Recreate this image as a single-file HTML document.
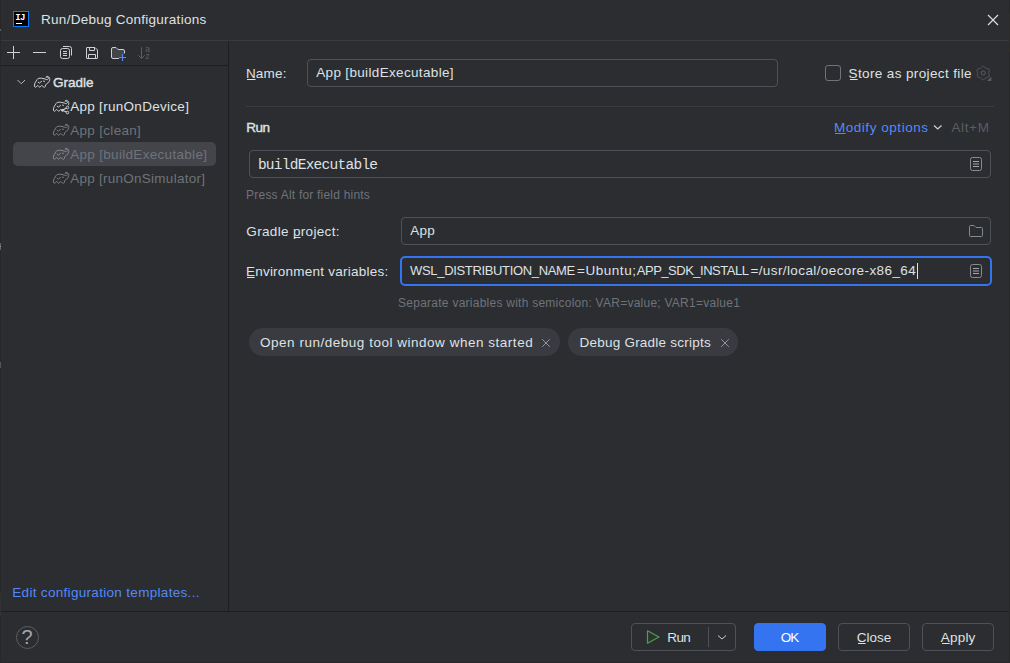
<!DOCTYPE html>
<html lang="en">
<head>
<meta charset="utf-8">
<title>Run/Debug Configurations</title>
<style>
html,body{margin:0;padding:0;}
body{width:1010px;height:663px;overflow:hidden;background:#2b2d30;font-family:"Liberation Sans",sans-serif;font-size:13.5px;color:#dfe1e5;position:relative;}
.abs{position:absolute;}
.t{position:absolute;white-space:nowrap;line-height:16px;height:16px;}
.b{font-weight:normal;font-size:13.5px;-webkit-text-stroke:0.4px currentColor;}
.dim{color:#6f737a;}
.link{color:#548af7;}
.hl{position:absolute;height:1px;background:#393b40;}
.vl{position:absolute;width:1px;background:#1e1f22;}
.field{position:absolute;box-sizing:border-box;border:1px solid #4e5157;border-radius:4px;height:28px;}
.btn{position:absolute;box-sizing:border-box;border:1px solid #4e5157;border-radius:4px;height:28px;top:623px;}
.chip{position:absolute;height:28px;border-radius:14px;background:#393b40;top:328px;}
svg{position:absolute;overflow:visible;}
u{text-decoration:none;background:linear-gradient(currentColor,currentColor) 1px 13px/calc(100% - 1.4px) 1px no-repeat;}
</style>
</head>
<body>
<!-- edge strips -->
<div class="abs" style="left:0;top:0;width:1px;height:663px;background:#28282a;"></div>
<div class="abs" style="left:0;top:29px;width:1px;height:2px;background:#5a5c5e;"></div>
<div class="abs" style="left:0;top:243px;width:1px;height:7px;background:#6b635a;"></div>
<div class="abs" style="left:0;top:246px;width:1px;height:1px;background:#8d8d8f;"></div>
<div class="abs" style="left:0;top:362px;width:1px;height:6px;background:#4c5a5e;"></div>
<div class="abs" style="left:0;top:593px;width:1px;height:23px;background:#303236;"></div>
<div class="abs" style="left:1009px;top:0;width:1px;height:663px;background:#27282a;"></div>
<div class="abs" style="left:1009px;top:13px;width:1px;height:39px;background:#2e2a25;"></div>
<div class="abs" style="left:0;top:662px;width:1010px;height:1px;background:#27282a;"></div>

<!-- title bar -->
<div class="abs" style="left:13px;top:11px;width:16px;height:16px;background:#000;box-sizing:border-box;border:1px solid #087cfa;"></div>
<div class="t" id="ij" style="left:15.2px;top:13px;font-size:9px;line-height:10px;height:10px;color:#fff;font-weight:bold;font-family:'Liberation Mono',monospace;letter-spacing:-0.5px;">IJ</div>
<div class="abs" style="left:16px;top:23px;width:6px;height:1px;background:#fff;"></div>
<div class="t" id="title" style="left:41.1px;top:12px;letter-spacing:0.26px;">Run/Debug Configurations</div>
<svg style="left:985px;top:12px;" width="16" height="16" viewBox="0 0 16 16"><path d="M3 3L13 13M13 3L3 13" stroke="#dfe1e5" stroke-width="1.1" fill="none"/></svg>
<div class="hl" style="left:1px;top:40px;width:1008px;"></div>

<!-- toolbar -->
<svg style="left:5px;top:44px;" width="16" height="16" viewBox="0 0 16 16"><path d="M2 8.5H15M8.5 2V15" stroke="#ced0d6" stroke-width="1" fill="none"/></svg>
<svg style="left:31px;top:44px;" width="16" height="16" viewBox="0 0 16 16"><path d="M2 8.5H15" stroke="#ced0d6" stroke-width="1" fill="none"/></svg>
<svg style="left:57px;top:44px;" width="16" height="16" viewBox="0 0 16 16"><g stroke="#ced0d6" stroke-width="1" fill="none"><rect x="3.5" y="4.5" width="9" height="10" rx="2"/><path d="M6 2.5H12.5Q14.5 2.5 14.5 4.5V11.5"/><path d="M6 7.5H10M6 9.5H10M6 11.5H10"/></g></svg>
<svg style="left:84px;top:45px;" width="16" height="16" viewBox="0 0 16 16"><g stroke="#ced0d6" stroke-width="1" fill="none" stroke-linejoin="round"><path d="M3 2.5H11L13.5 5V13Q13.5 13.500 13 13.500H3Q2.500 13.500 2.500 13V3Q2.500 2.500 3 2.500Z"/><path d="M5.5 2.500V5.500H10.500V2.500"/><path d="M4.500 13.500V9.500H11.500V13.500"/></g></svg>
<svg style="left:110px;top:45px;" width="16" height="16" viewBox="0 0 16 16"><path d="M9 13.500H3Q1.500 13.500 1.500 12V4Q1.500 2.500 3 2.500H6L8 4.500H13Q14.500 4.500 14.500 6V8.500" stroke="#ced0d6" stroke-width="1" fill="#43454a"/><path d="M9 12.500H16M12.500 9V16" stroke="#548af7" stroke-width="1.200" fill="none"/></svg>
<svg style="left:136px;top:45px;" width="16" height="16" viewBox="0 0 16 16"><path d="M5.500 2.300V13.300M2.300 10.300L5.500 13.500L8.700 10.300" stroke="#5a5d63" stroke-width="1" fill="none"/><text x="9.300" y="7.300" font-family="Liberation Sans, sans-serif" font-size="8.500" fill="#5a5d63">a</text><text x="9.600" y="14" font-family="Liberation Sans, sans-serif" font-size="8.500" fill="#5a5d63">z</text></svg>
<div class="hl" style="left:1px;top:65px;width:227px;background:#1e1f22;"></div>

<!-- sidebar divider -->
<div class="vl" style="left:228px;top:41px;height:570px;"></div>

<!-- tree -->
<div class="abs" style="left:13px;top:142px;width:203px;height:24px;border-radius:5px;background:#43454a;"></div>
<svg style="left:13px;top:74px;" width="16" height="16" viewBox="0 0 16 16"><path d="M4.500 6L8.300 9.800L12 6" stroke="#b4b8bf" stroke-width="1" fill="none"/></svg>
<svg style="left:34px;top:74px;opacity:1;" width="16" height="16" viewBox="0 0 16 16"><path d="M12.400 2.600C13 2.100 14 2.200 14.800 3C15.600 3.800 16 5 15.700 6.200C15.400 7.600 14.400 8.600 12.700 9.900L11.600 10.700L11.300 12.500Q10.600 13.600 9.900 13.300Q9.300 13 8.800 12.300Q8.100 11.300 7.400 11.600Q6.800 12 6.200 13Q5.500 13.400 4.800 12.600Q4.200 11.500 3.600 11.500Q3 11.700 2.600 12.600Q2 13.400 1.200 13.100Q0.400 12.800 0.400 12C0.400 10.600 0.800 9.200 1.400 8.200C2 7.200 2.600 6.600 3 5.800C3.300 5 3.800 4.500 5 4.300C6.600 4 8.400 4.200 10 4.700C11 5 12 5.500 12.600 5.600C13.400 5.800 14.200 5.400 14.400 4.600C14.600 3.800 14 3.200 13.200 3.100C12.700 3 12.200 3.200 11.900 3.500" stroke="#ced0d6" stroke-width="1" fill="none" stroke-linejoin="round" stroke-linecap="round"/><path d="M4.200 8.200L5.400 9.100L7.500 7.400M9.500 7.100L10.500 7.300" stroke="#ced0d6" stroke-width="1" fill="none" stroke-linecap="round"/></svg>
<div class="t b" id="gradle" style="left:53.1px;top:75px;letter-spacing:-0.02px;">Gradle</div>
<svg style="left:53px;top:98px;opacity:1;" width="16" height="16" viewBox="0 0 16 16"><path d="M12.400 2.600C13 2.100 14 2.200 14.800 3C15.600 3.800 16 5 15.700 6.200C15.400 7.600 14.400 8.600 12.700 9.900L11.600 10.700L11.300 12.500Q10.600 13.600 9.900 13.300Q9.300 13 8.800 12.300Q8.100 11.300 7.400 11.600Q6.800 12 6.200 13Q5.500 13.400 4.800 12.600Q4.200 11.500 3.600 11.500Q3 11.700 2.600 12.600Q2 13.400 1.200 13.100Q0.400 12.800 0.400 12C0.400 10.600 0.800 9.200 1.400 8.200C2 7.200 2.600 6.600 3 5.800C3.300 5 3.800 4.500 5 4.300C6.600 4 8.400 4.200 10 4.700C11 5 12 5.500 12.600 5.600C13.400 5.800 14.200 5.400 14.400 4.600C14.600 3.800 14 3.200 13.200 3.100C12.700 3 12.200 3.200 11.900 3.500" stroke="#ced0d6" stroke-width="1" fill="none" stroke-linejoin="round" stroke-linecap="round"/><path d="M4.200 8.200L5.400 9.100L7.500 7.400M9.500 7.100L10.500 7.300" stroke="#ced0d6" stroke-width="1" fill="none" stroke-linecap="round"/><g stroke="#2b2d30" stroke-width="2.600" fill="#2b2d30"><path d="M10.300 12.300L14.500 9.500M10.300 12.300L14.500 14.500"/><circle cx="14.500" cy="9.500" r="1.300"/><circle cx="14.500" cy="14.500" r="1.300"/></g><g stroke="#ced0d6" stroke-width="1"><path d="M9.300 12.300L14.500 9.500M9.300 12.300L14.500 14.500" fill="none" stroke-width="1.200"/><circle cx="9.300" cy="12.300" r="0.900" fill="#ced0d6"/><circle cx="14.500" cy="9.500" r="1.300" fill="#2b2d30"/><circle cx="14.500" cy="14.500" r="1.300" fill="#2b2d30"/></g></svg>
<div class="t" id="r1" style="left:70.2px;top:99px;letter-spacing:0.29px;">App [runOnDevice]</div>
<svg style="left:53px;top:122px;opacity:0.5;" width="16" height="16" viewBox="0 0 16 16"><path d="M12.400 2.600C13 2.100 14 2.200 14.800 3C15.600 3.800 16 5 15.700 6.200C15.400 7.600 14.400 8.600 12.700 9.900L11.600 10.700L11.300 12.500Q10.600 13.600 9.900 13.300Q9.300 13 8.800 12.300Q8.100 11.300 7.400 11.600Q6.800 12 6.200 13Q5.500 13.400 4.800 12.600Q4.200 11.500 3.600 11.500Q3 11.700 2.600 12.600Q2 13.400 1.200 13.100Q0.400 12.800 0.400 12C0.400 10.600 0.800 9.200 1.400 8.200C2 7.200 2.600 6.600 3 5.800C3.300 5 3.800 4.500 5 4.300C6.600 4 8.400 4.200 10 4.700C11 5 12 5.500 12.600 5.600C13.400 5.800 14.200 5.400 14.400 4.600C14.600 3.800 14 3.200 13.200 3.100C12.700 3 12.200 3.200 11.900 3.500" stroke="#ced0d6" stroke-width="1" fill="none" stroke-linejoin="round" stroke-linecap="round"/><path d="M4.200 8.200L5.400 9.100L7.500 7.400M9.500 7.100L10.500 7.300" stroke="#ced0d6" stroke-width="1" fill="none" stroke-linecap="round"/></svg>
<div class="t dim" id="r2" style="left:70.2px;top:123px;letter-spacing:0.31px;">App [clean]</div>
<svg style="left:53px;top:146px;opacity:0.5;" width="16" height="16" viewBox="0 0 16 16"><path d="M12.400 2.600C13 2.100 14 2.200 14.800 3C15.600 3.800 16 5 15.700 6.200C15.400 7.600 14.400 8.600 12.700 9.900L11.600 10.700L11.300 12.500Q10.600 13.600 9.900 13.300Q9.300 13 8.800 12.300Q8.100 11.300 7.400 11.600Q6.800 12 6.200 13Q5.500 13.400 4.800 12.600Q4.200 11.500 3.600 11.500Q3 11.700 2.600 12.600Q2 13.400 1.200 13.100Q0.400 12.800 0.400 12C0.400 10.600 0.800 9.200 1.400 8.200C2 7.200 2.600 6.600 3 5.800C3.300 5 3.800 4.500 5 4.300C6.600 4 8.400 4.200 10 4.700C11 5 12 5.500 12.600 5.600C13.400 5.800 14.200 5.400 14.400 4.600C14.600 3.800 14 3.200 13.200 3.100C12.700 3 12.200 3.200 11.900 3.500" stroke="#ced0d6" stroke-width="1" fill="none" stroke-linejoin="round" stroke-linecap="round"/><path d="M4.200 8.200L5.400 9.100L7.500 7.400M9.500 7.100L10.500 7.300" stroke="#ced0d6" stroke-width="1" fill="none" stroke-linecap="round"/></svg>
<div class="t dim" id="r3" style="left:70.2px;top:147px;letter-spacing:0.31px;">App [buildExecutable]</div>
<svg style="left:53px;top:170px;opacity:0.5;" width="16" height="16" viewBox="0 0 16 16"><path d="M12.400 2.600C13 2.100 14 2.200 14.800 3C15.600 3.800 16 5 15.700 6.200C15.400 7.600 14.400 8.600 12.700 9.900L11.600 10.700L11.300 12.500Q10.600 13.600 9.900 13.300Q9.300 13 8.800 12.300Q8.100 11.300 7.400 11.600Q6.800 12 6.200 13Q5.500 13.400 4.800 12.600Q4.200 11.500 3.600 11.500Q3 11.700 2.600 12.600Q2 13.400 1.200 13.100Q0.400 12.800 0.400 12C0.400 10.600 0.800 9.200 1.400 8.200C2 7.200 2.600 6.600 3 5.800C3.300 5 3.800 4.500 5 4.300C6.600 4 8.400 4.200 10 4.700C11 5 12 5.500 12.600 5.600C13.400 5.800 14.200 5.400 14.400 4.600C14.600 3.800 14 3.200 13.200 3.100C12.700 3 12.200 3.200 11.900 3.500" stroke="#ced0d6" stroke-width="1" fill="none" stroke-linejoin="round" stroke-linecap="round"/><path d="M4.200 8.200L5.400 9.100L7.500 7.400M9.500 7.100L10.500 7.300" stroke="#ced0d6" stroke-width="1" fill="none" stroke-linecap="round"/></svg>
<div class="t dim" id="r4" style="left:70.2px;top:171px;letter-spacing:0.26px;">App [runOnSimulator]</div>
<div class="t link" id="edit" style="left:12.3px;top:585px;letter-spacing:0.31px;">Edit configuration templates...</div>

<!-- right panel -->
<div class="t" id="name" style="left:245.9px;top:66px;letter-spacing:0.20px;"><u>N</u>ame:</div>
<div class="field" style="left:307px;top:59px;width:471px;"></div>
<div class="t" id="namev" style="left:316.2px;top:65px;letter-spacing:0.34px;">App [buildExecutable]</div>
<div class="abs" style="left:825px;top:65px;width:16px;height:16px;box-sizing:border-box;border:1px solid #6f737a;border-radius:3px;"></div>
<div class="t" id="store" style="left:848.6px;top:66px;letter-spacing:0.37px;"><u>S</u>tore as project file</div>
<svg style="left:976px;top:65px;" width="16" height="16" viewBox="0 0 16 16"><g stroke="#5a5d63" stroke-width="1" fill="none"><path d="M12.65 8.00L12.68 7.71L12.75 7.42L12.86 7.10L12.99 6.77L13.12 6.41L13.22 6.04L13.29 5.66L13.29 5.29L13.23 4.93L13.09 4.60L12.88 4.31L12.60 4.08L12.27 3.90L11.91 3.76L11.53 3.67L11.16 3.60L10.80 3.55L10.48 3.49L10.19 3.40L9.93 3.28L9.69 3.11L9.47 2.90L9.25 2.65L9.03 2.37L8.79 2.08L8.52 1.80L8.22 1.56L7.90 1.37L7.55 1.24L7.20 1.20L6.85 1.24L6.50 1.37L6.18 1.56L5.88 1.80L5.61 2.08L5.37 2.37L5.15 2.65L4.93 2.90L4.71 3.11L4.48 3.28L4.21 3.40L3.92 3.49L3.60 3.55L3.24 3.60L2.87 3.67L2.49 3.76L2.13 3.90L1.80 4.08L1.52 4.31L1.31 4.60L1.17 4.93L1.11 5.29L1.11 5.66L1.18 6.04L1.28 6.41L1.41 6.77L1.54 7.10L1.65 7.42L1.72 7.71L1.75 8.00L1.72 8.29L1.65 8.58L1.54 8.90L1.41 9.23L1.28 9.59L1.18 9.96L1.11 10.34L1.11 10.71L1.17 11.07L1.31 11.40L1.52 11.69L1.80 11.92L2.13 12.10L2.49 12.24L2.87 12.33L3.24 12.40L3.60 12.45L3.92 12.51L4.21 12.60L4.47 12.72L4.71 12.89L4.93 13.10L5.15 13.35L5.37 13.63L5.61 13.92L5.88 14.20L6.18 14.44L6.50 14.63L6.85 14.76L7.20 14.80L7.55 14.76L7.90 14.63L8.22 14.44L8.52 14.20L8.79 13.92L9.03 13.63L9.25 13.35L9.47 13.10L9.69 12.89L9.93 12.72L10.19 12.60L10.48 12.51L10.80 12.45L11.16 12.40L11.53 12.33L11.91 12.24L12.27 12.10L12.60 11.92L12.88 11.69L13.09 11.40L13.23 11.07L13.29 10.71L13.29 10.34L13.22 9.96L13.12 9.59L12.99 9.23L12.86 8.90L12.75 8.58L12.68 8.29Z" stroke-linejoin="round"/><circle cx="7.2" cy="8.0" r="2.1"/></g><path d="M15.300 11.800V16H11.100Z" fill="#5a5d63"/></svg>
<div class="hl" style="left:246px;top:106px;width:748px;"></div>
<div class="t b" id="run" style="left:246.3px;top:120px;letter-spacing:-0.55px;">Run</div>
<div class="t link" id="modify" style="left:833.9px;top:120px;letter-spacing:0.55px;"><u>M</u>odify options</div>
<svg style="left:929.5px;top:119px;" width="16" height="16" viewBox="0 0 16 16"><path d="M4 6.500L7.700 10L11.500 6.500" stroke="#ced0d6" stroke-width="1.200" fill="none"/></svg>
<div class="t" id="altm" style="left:951.4px;top:120px;color:#5a5d63;letter-spacing:0.65px;">Alt+M</div>
<div class="field" style="left:249px;top:150px;width:742px;"></div>
<div class="t" id="task" style="left:257.9px;top:157px;font-family:'Liberation Mono',monospace;font-size:14.5px;letter-spacing:-0.74px;">buildExecutable</div>
<svg style="left:968px;top:156px;" width="16" height="16" viewBox="0 0 16 16"><g stroke-width="1" fill="none"><rect x="2.500" y="1.500" width="11" height="13" rx="2" stroke="#868a91"/><path d="M5 5.500H11M5 8H11M5 10.500H11" stroke="#a0a3a9"/></g></svg>
<div class="t dim" id="press" style="left:246.1px;top:187px;font-size:12px;letter-spacing:0.21px;">Press Alt for field hints</div>
<div class="t" id="gproj" style="left:246.3px;top:224px;letter-spacing:0.33px;">Gradle <u>p</u>roject:</div>
<div class="field" style="left:401px;top:217px;width:590px;"></div>
<div class="t" id="gprojv" style="left:410.2px;top:223px;letter-spacing:0.32px;">App</div>
<svg style="left:968px;top:223px;" width="16" height="16" viewBox="0 0 16 16"><path d="M2.500 13.500Q1.500 13.500 1.500 12.500V3.500Q1.500 2.500 2.500 2.500H6L8 4.500H13.500Q14.500 4.500 14.500 5.500V12.500Q14.500 13.500 13.500 13.500Z" stroke="#868a91" stroke-width="1" fill="none" stroke-linejoin="round"/></svg>
<div class="t" id="env" style="left:245.9px;top:264px;letter-spacing:0.24px;"><u>E</u>nvironment variables:</div>
<div class="abs" style="left:400px;top:256px;width:592px;height:30px;box-sizing:border-box;border:2px solid #3574f0;border-radius:5px;"></div>
<div class="t" id="envA" style="font-size:13px;left:410.1px;top:263px;letter-spacing:-0.34px;">WSL_DISTRIBUTION_NAME</div>
<div class="t" id="envB" style="left:577.0px;top:263px;letter-spacing:0.54px;">=Ubuntu;</div>
<div class="t" id="envC" style="font-size:13px;left:636.8px;top:263px;letter-spacing:-0.49px;">APP_SDK_INSTALL</div>
<div class="t" id="envD" style="left:750.4px;top:263px;letter-spacing:0.40px;">=/usr/local/oecore-x86_64</div>
<div class="abs" style="left:917px;top:263px;width:1px;height:16px;background:#dfe1e5;"></div>
<svg style="left:968px;top:263px;" width="16" height="16" viewBox="0 0 16 16"><g stroke-width="1" fill="none"><rect x="2.500" y="1.500" width="11" height="13" rx="2" stroke="#868a91"/><path d="M5 5.500H11M5 8H11M5 10.500H11" stroke="#a0a3a9"/></g></svg>
<div class="t dim" id="sep" style="left:398.1px;top:295px;font-size:12px;letter-spacing:0.25px;">Separate variables with semicolon: VAR=value; VAR1=value1</div>
<div class="chip" style="left:249px;width:311px;"></div>
<div class="t" id="chip1" style="left:260.0px;top:335px;letter-spacing:0.52px;">Open run/debug tool window when started</div>
<svg style="left:538px;top:335px;" width="16" height="16" viewBox="0 0 16 16"><path d="M4.200 4.200L11.800 11.800M11.800 4.200L4.200 11.800" stroke="#9196a0" stroke-width="1" fill="none"/></svg>
<div class="chip" style="left:568px;width:170px;"></div>
<div class="t" id="chip2" style="left:579.5px;top:335px;letter-spacing:0.23px;">Debug Gradle scripts</div>
<svg style="left:716.500px;top:335px;" width="16" height="16" viewBox="0 0 16 16"><path d="M4.200 4.200L11.800 11.800M11.800 4.200L4.200 11.800" stroke="#9196a0" stroke-width="1" fill="none"/></svg>

<!-- bottom -->
<div class="hl" style="left:1px;top:611px;width:1008px;background:#1e1f22;"></div>
<div class="abs" style="left:16px;top:626px;width:23px;height:23px;box-sizing:border-box;border:1px solid #5a5d63;border-radius:12px;"></div>
<div class="t" id="q" style="left:21.4px;top:626px;font-size:20px;line-height:22px;height:22px;color:#a4a7ae;">?</div>
<div class="btn" style="left:631px;width:105px;"></div>
<svg style="left:645px;top:629px;" width="16" height="16" viewBox="0 0 16 16"><path d="M2.500 1.800L14 8L2.500 14.200Z" stroke="#57965c" stroke-width="1.200" fill="#273828" stroke-linejoin="round"/></svg>
<div class="t" id="runb" style="left:667.2px;top:630px;letter-spacing:-0.56px;">Run</div>
<div class="abs" style="left:708px;top:627px;width:1px;height:20px;background:#4e5157;"></div>
<svg style="left:714px;top:629px;" width="16" height="16" viewBox="0 0 16 16"><path d="M4 6.500L8 10L12 6.500" stroke="#ced0d6" stroke-width="1" fill="none"/></svg>
<div class="btn" style="left:754px;width:72px;background:#3574f0;border-color:#3574f0;"></div>
<div class="t" id="ok" style="left:780.8px;top:630px;color:#fff;letter-spacing:-0.93px;">OK</div>
<div class="btn" style="left:838px;width:72px;"></div>
<div class="t" id="close" style="left:856.7px;top:630px;letter-spacing:-0.00px;"><u>C</u>lose</div>
<div class="btn" style="left:922px;width:72px;"></div>
<div class="t" id="apply" style="left:940.8px;top:630px;letter-spacing:0.19px;"><u>A</u>pply</div>
</body>
</html>
